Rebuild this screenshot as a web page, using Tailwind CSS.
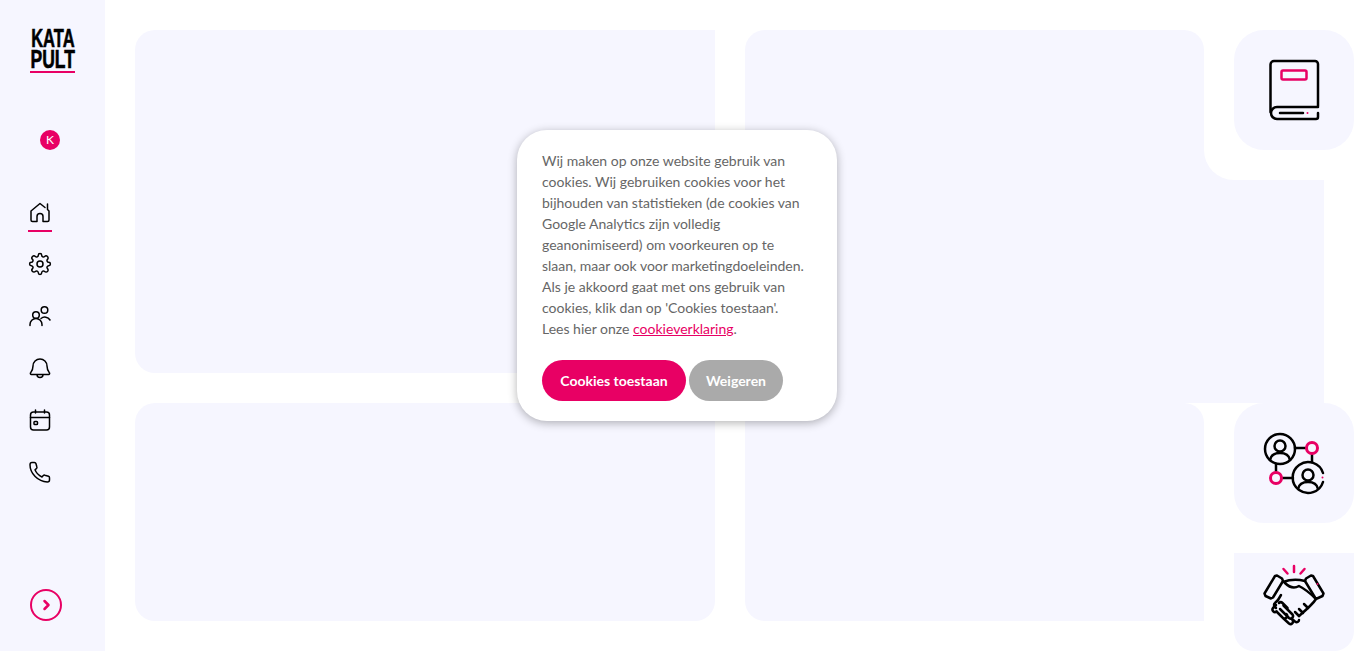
<!DOCTYPE html>
<html lang="nl">
<head>
    <meta charset="UTF-8" />
    <meta name="viewport" content="width=device-width, initial-scale=1" />
    <title>Katapult</title>
    <script src="https://cdn.jsdelivr.net/npm/@tailwindcss/browser@4"></script>
</head>

<body class="relative h-[651px] overflow-hidden bg-white font-['Lato',sans-serif]">
    <div class="flex h-full">
        <!-- Sidebar -->
        <aside class="flex h-full w-[105px] shrink-0 flex-col bg-[#f6f6ff] pl-[30px]">
            <div class="mt-[27px] w-[45px]">
                <div class="flex h-[22px] w-[45px] items-center justify-center overflow-visible font-['Liberation_Sans',sans-serif] text-[25px] leading-none font-bold text-black [-webkit-text-stroke:0.6px_black]">
                    <span class="scale-x-[0.66]">KATA</span>
                </div>
                <div class="-mt-px flex h-[22px] w-[45px] items-center justify-center font-['Liberation_Sans',sans-serif] text-[25px] leading-none font-bold text-black [-webkit-text-stroke:0.6px_black]">
                    <span class="scale-x-[0.70]">PULT</span>
                </div>
                <div class="mt-px h-[2px] w-[45px] bg-[#e80064]"></div>
            </div>

            <div class="mt-[57px] ml-[10px] flex h-5 w-5 items-center justify-center rounded-full bg-[#e80064] text-[12px] text-white">K</div>

            <nav class="mt-[50px] -ml-[2px] flex w-6 flex-col items-center">
                <div class="flex h-[52px] w-6 flex-col">
                    <svg class="h-6 w-6" viewBox="0 0 24 24" fill="none" stroke="#000" stroke-width="1.5" stroke-linecap="round" stroke-linejoin="round"><path d="M9 21.5H4.5a1.5 1.5 0 0 1-1.500-1.500v-9L12 3.500l5 4M21 11v9a1.500 1.500 0 0 1-1.500 1.500H15M9 21.500v-5a3 3 0 0 1 6 0v5M19.500 4v5.500l1.500 1.500"/></svg>
                    <div class="mt-[6px] h-[2px] w-6 bg-[#e80064]"></div>
                </div>
                <svg class="mb-7 h-6 w-6" viewBox="0 0 24 24" fill="none" stroke="#000" stroke-width="1.5" stroke-linecap="round" stroke-linejoin="round"><circle cx="12" cy="12" r="3"/><path d="M10.300 3.300a1.700 1.700 0 0 1 3.400 0 1.700 1.700 0 0 0 2.900 1.200 1.700 1.700 0 0 1 2.900 2.900 1.700 1.700 0 0 0 1.200 2.900 1.700 1.700 0 0 1 0 3.400 1.700 1.700 0 0 0-1.200 2.900 1.700 1.700 0 0 1-2.900 2.900 1.700 1.700 0 0 0-2.900 1.200 1.700 1.700 0 0 1-3.400 0 1.700 1.700 0 0 0-2.900-1.200 1.700 1.700 0 0 1-2.900-2.900 1.700 1.700 0 0 0-1.200-2.900 1.700 1.700 0 0 1 0-3.400 1.700 1.700 0 0 0 1.200-2.900 1.700 1.700 0 0 1 2.900-2.900 1.700 1.700 0 0 0 2.900-1.200z"/></svg>
                <svg class="mb-7 h-6 w-6" viewBox="0 0 24 24" fill="none" stroke="#000" stroke-width="1.500" stroke-linecap="round" stroke-linejoin="round"><circle cx="8" cy="11" r="3.300"/><circle cx="16.500" cy="6" r="3.300"/><path d="M2 21.500v-1a6 6 0 0 1 12 0v1M13 14.500a6 6 0 0 1 9 1.500"/></svg>
                <svg class="mb-7 h-6 w-6" viewBox="0 0 24 24" fill="none" stroke="#000" stroke-width="1.500" stroke-linecap="round" stroke-linejoin="round"><path d="M12 3a7 7 0 0 0-7 7c0 4-1.300 5.500-2.500 7a1 1 0 0 0 .8 1.500h17.400a1 1 0 0 0 .8-1.500C20.300 15.500 19 14 19 10a7 7 0 0 0-7-7zM9 18.500a3 3 0 0 0 6 0"/></svg>
                <svg class="mb-7 h-6 w-6" viewBox="0 0 24 24" fill="none" stroke="#000" stroke-width="1.500" stroke-linecap="round" stroke-linejoin="round"><rect x="2.500" y="4" width="19" height="18" rx="3"/><path d="M2.500 9.500h19M7.500 2v3M16.500 2v3"/><rect x="6" y="13.500" width="3.500" height="3" rx=".8"/></svg>
                <svg class="h-6 w-6" viewBox="0 0 24 24" fill="none" stroke="#000" stroke-width="1.500" stroke-linecap="round" stroke-linejoin="round"><path d="M4 2.500h2.500c.7 0 1.200.4 1.400 1l1 3.500c.2.600 0 1.200-.5 1.600L7 9.800c1.200 3 3.700 5.700 7 7.200l1.300-1.400c.4-.5 1-.6 1.600-.4l3.600 1.100c.6.200 1 .7 1 1.400v2.300c0 1.100-1 2-2.200 2C10 21.500 2 13.500 2 4.700c0-1.200.9-2.200 2-2.200z"/></svg>
            </nav>

            <div class="mt-auto mb-[30px] flex h-8 w-8 items-center justify-center rounded-full border-2 border-[#e80064]">
                <svg class="h-3 w-3" viewBox="0 0 12 12" fill="none" stroke="#e80064" stroke-width="2.500" stroke-linecap="round" stroke-linejoin="round"><path d="M4.500 2l4 4-4 4"/></svg>
            </div>
        </aside>

        <!-- Panels -->
        <main class="flex gap-[30px] pt-[30px] pl-[30px]">
            <div class="flex w-[580px] flex-col gap-[30px]">
                <div class="h-[343px] rounded-l-[20px] bg-[#f6f6ff]"></div>
                <div class="h-[218px] rounded-[20px] bg-[#f6f6ff]"></div>
            </div>

            <div class="flex w-[609px] flex-col">
                <div class="flex h-[150px]">
                    <div class="w-[459px] rounded-t-[20px] bg-[#f6f6ff]"></div>
                    <div class="flex w-[30px] flex-col justify-end">
                        <div class="h-[30px] bg-[#f6f6ff]">
                            <div class="h-full rounded-bl-[30px] bg-white"></div>
                        </div>
                    </div>
                    <div class="flex h-[120px] w-[120px] rounded-[30px] bg-[#f6f6ff]">
                        <svg class="h-[120px] w-[120px]" viewBox="0 0 120 120" fill="none" stroke="#000" stroke-width="2.500" stroke-linecap="round" stroke-linejoin="round">
                            <path d="M84 76V34a3 3 0 0 0-3-3H40a3.500 3.500 0 0 0-3.500 3.500V82"/>
                            <path d="M84 77H43a6 6 0 0 0 0 12h39a2 2 0 0 0 2-2v-4"/>
                            <path d="M46 83h23"/>
                            <rect x="47.500" y="40.500" width="25" height="9" rx="1.500" stroke="#e80064"/>
                            <circle cx="73.500" cy="83" r="1" fill="#e80064" stroke="none"/>
                        </svg>
                    </div>
                </div>
                <div class="h-[223px] w-[579px] bg-[#f6f6ff]"></div>
                <div class="flex">
                    <div class="h-[218px] w-[459px] rounded-l-[20px] rounded-tr-[20px] bg-[#f6f6ff]"></div>
                    <div class="ml-[30px] flex flex-col gap-[30px]">
                        <div class="h-[120px] w-[120px] rounded-[30px] bg-[#f6f6ff]">
                            <svg class="h-[120px] w-[120px]" viewBox="0 0 120 120" fill="none" stroke="#000" stroke-width="2.500" stroke-linecap="round">
                                <circle cx="46" cy="46" r="15"/>
                                <path d="M89 70a15.500 15.500 0 1 0 0 9"/>
                                <circle cx="46" cy="43" r="5.500"/>
                                <path d="M36 57c1-5 5-7 10-7s9 2 10 7"/>
                                <circle cx="74" cy="72" r="5.500"/>
                                <path d="M64 86c1-5 5-7 10-7s9 2 10 7"/>
                                <path d="M61 45h11M78 51v8M42 61v8M48 75h11"/>
                                <circle cx="78" cy="45" r="5.500" stroke="#e80064" stroke-width="3"/>
                                <circle cx="42" cy="75" r="5.500" stroke="#e80064" stroke-width="3"/>
                                <circle cx="88.500" cy="74.500" r="1" fill="#e80064" stroke="none"/>
                            </svg>
                        </div>
                        <div class="h-[98px] w-[120px] rounded-b-[20px] bg-[#f6f6ff]">
                            <svg class="h-[98px] w-[120px]" viewBox="0 0 120 98" fill="none" stroke="#000" stroke-width="2.500" stroke-linecap="round" stroke-linejoin="round">
                                <path d="M60 13v6M49.500 16l4 4.500M70.500 16l-4 4.500" stroke="#e80064"/>
                                <path d="M41 23l-10.500 17.500 1 2.500 5.500 2.500 2-1 10-16.500-1-2.500-5-3z"/>
                                <path d="M79 23l10.500 17.500-1 2.500-5.500 2.500-2-1-10-16.500 1-2.500 5-3z"/>
                                <path d="M49 29c8-3 14-3 22-1M51 30c4 4 9 6 14 3 8 4 13 9 17 13M47 42l-3 5M82 46c-3 5-10 11-17 17"/>
                                <path d="M44 47l-3 3a2.500 2.500 0 0 0 0 4l1 1M42 52l-3 3a2.500 2.500 0 0 0 3.500 3.500M45 50a2.500 2.500 0 0 1 3.500 0l5 5"/>
                                <path d="M42.500 58.500l6 6a2.500 2.500 0 0 0 4-3.500M46 56l9 9a2.500 2.500 0 0 0 3.500-3.500l-9-9M49 65l6 5.500a2.500 2.500 0 0 0 3.500-3.500"/>
                                <path d="M58 66l3 2.500c2 1.500 4 0 4-1.500M65 63l-4-4M69 60l-4-4M74 55l-4-4"/>
                                <circle cx="83.500" cy="31" r="1" fill="#e80064" stroke="none"/>
                            </svg>
                        </div>
                    </div>
                </div>
            </div>
        </main>
    </div>

    <!-- Cookie melding -->
    <div class="absolute top-[130px] left-[517px] h-[291px] w-[320px] rounded-[30px] bg-white px-[25px] pt-[20px] shadow-[0_2px_10px_rgba(0,0,0,0.3)]">
        <p class="text-[14px] leading-[21px] whitespace-nowrap text-[#666666]">
            Wij maken op onze website gebruik van<br>
            cookies. Wij gebruiken cookies voor het<br>
            bijhouden van statistieken (de cookies van<br>
            Google Analytics zijn volledig<br>
            geanonimiseerd) om voorkeuren op te<br>
            slaan, maar ook voor marketingdoeleinden.<br>
            Als je akkoord gaat met ons gebruik van<br>
            cookies, klik dan op 'Cookies toestaan'.<br>
            Lees hier onze <a href="#" class="text-[#e80064] underline">cookieverklaring</a>.
        </p>
        <div class="mt-[21px] flex gap-[3px]">
            <button class="h-[41px] w-[144px] rounded-full bg-[#e80064] text-[14px] font-bold text-white">Cookies toestaan</button>
            <button class="h-[41px] w-[94px] rounded-full bg-[#aaaaaa] text-[14px] font-bold text-white">Weigeren</button>
        </div>
    </div>
</body>
</html>
